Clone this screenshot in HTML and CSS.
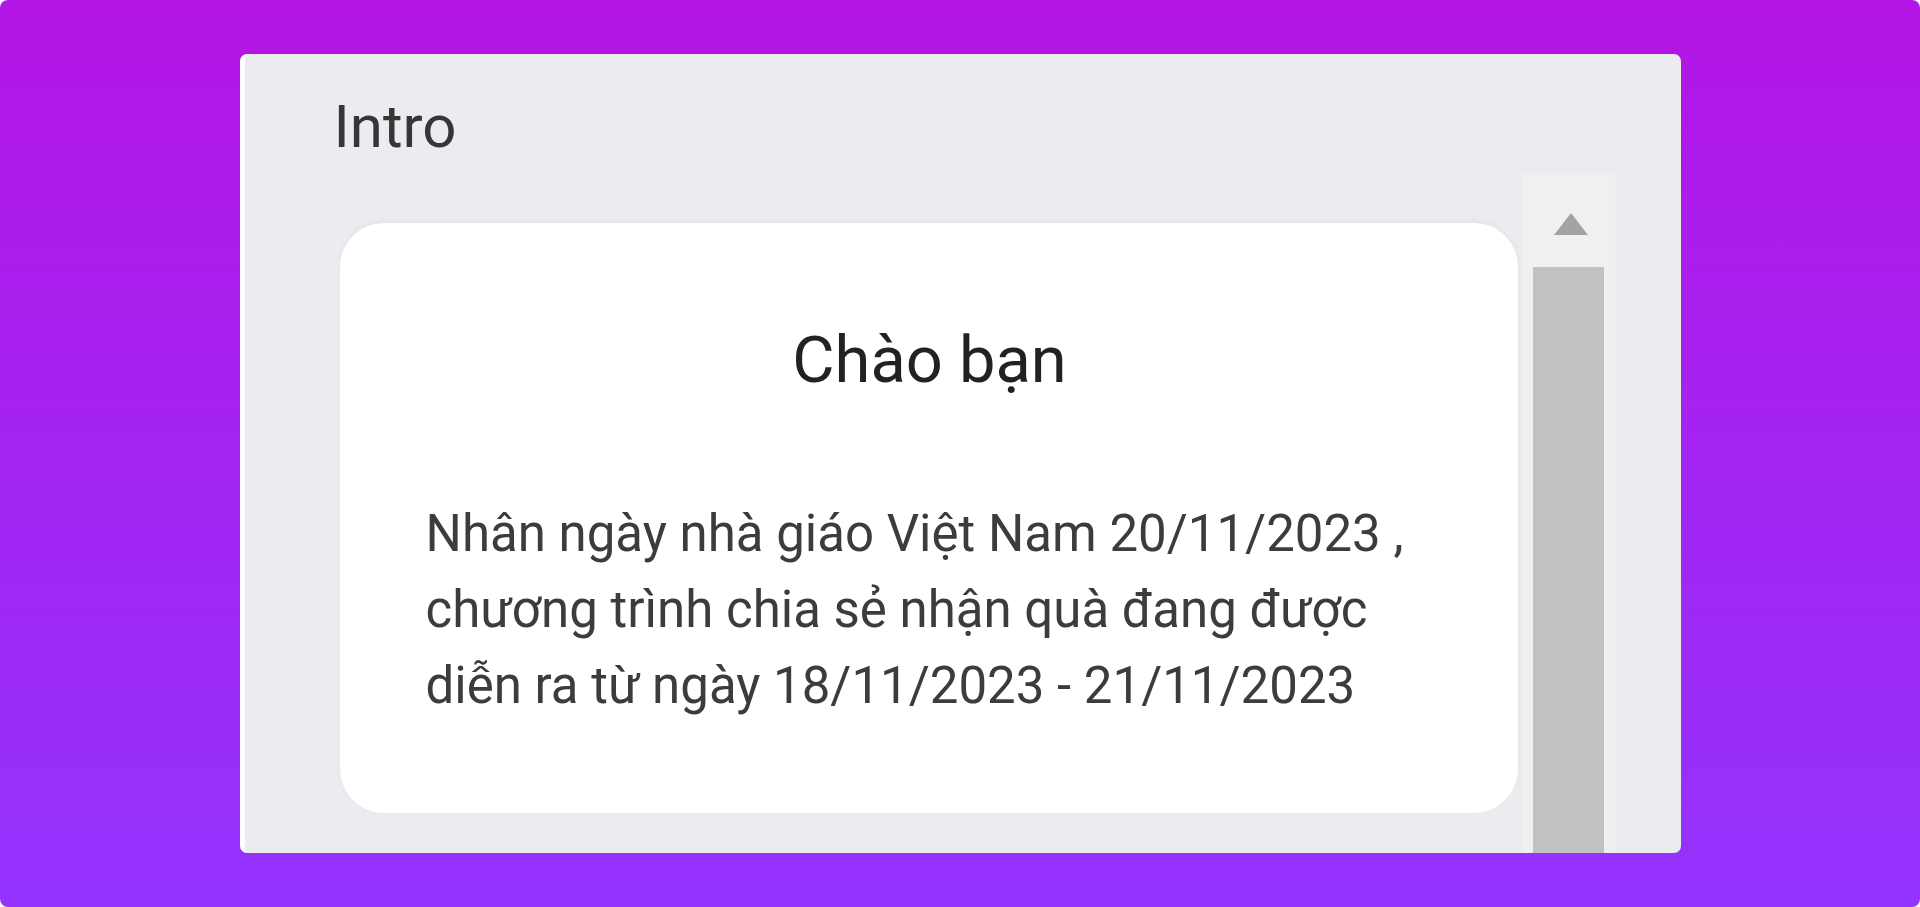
FILE: index.html
```html
<!DOCTYPE html>
<html lang="vi">
<head>
    <meta charset="UTF-8">
    <meta name="viewport" content="width=device-width, initial-scale=1.0">
    <title>Intro</title>
    <link rel="stylesheet" href="styles.css">
</head>
<body>
    <div class="page">
        <div class="panel">
            <h1 class="panel-title">Intro</h1>
            <div class="panel-body">
                <div class="scroll-content">
                    <div class="greeting">
                        <h2>Chào bạn</h2>
                        <p>Nhân ngày nhà giáo Việt Nam 20/11/2023 , chương trình chia sẻ nhận quà đang được diễn ra từ ngày 18/11/2023 - 21/11/2023</p>
                    </div>
                </div>
                <div class="scrollbar">
                    <div class="scroll-btn"><span class="arrow-up"></span></div>
                    <div class="scroll-thumb"></div>
                </div>
            </div>
        </div>
    </div>
</body>
</html>
```

FILE: styles.css
```css
html, body { margin: 0; padding: 0; background: #fff; }
body { font-family: Roboto, "Liberation Sans", Arial, sans-serif; }

.page {
    width: 1920px;
    height: 907px;
    border-radius: 8px;
    background: linear-gradient(180deg, #b315e4 0%, #9433fe 100%);
    display: flex;
    align-items: center;
    justify-content: center;
}

.panel {
    box-sizing: border-box;
    width: 1441px;
    height: 799px;
    background: #ebecef;
    border-left: 5px solid #fff;
    border-radius: 7px;
    padding: 37px 66px 0 89px;
    overflow: hidden;
    display: flex;
    flex-direction: column;
}

.panel-title {
    margin: 0;
    font-size: 60px;
    line-height: 72px;
    font-weight: 400;
    color: #363636;
}

.panel-body {
    margin-top: 11px;
    display: flex;
    flex: 1;
    min-height: 0;
}

.scroll-content { flex: 1; padding: 49px 4px 0 6px; }

.greeting {
    background: #fff;
    border-radius: 44px;
    padding: 99px 84px 89px 86px;
    box-shadow: 0 -2px 6px rgba(0, 0, 0, 0.04);
}

.greeting h2 {
    margin: 0 0 98px;
    text-align: center;
    font-size: 65px;
    line-height: 76px;
    font-weight: 400;
    color: #222;
}

.greeting p {
    margin: 0;
    font-size: 51px;
    line-height: 76px;
    color: #3c3c3c;
}

.scrollbar {
    width: 93px;
    background: #f0f0f0;
    display: flex;
    flex-direction: column;
    align-items: center;
}

.scroll-btn {
    height: 93px;
    width: 100%;
    display: flex;
    align-items: center;
    justify-content: center;
}

.arrow-up {
    width: 0;
    height: 0;
    border-left: 17px solid transparent;
    border-right: 17px solid transparent;
    border-bottom: 22px solid #a3a3a3;
    margin: 6px 0 0 5px;
}

.scroll-thumb { width: 71px; flex: 1; background: #c1c1c1; }
```
